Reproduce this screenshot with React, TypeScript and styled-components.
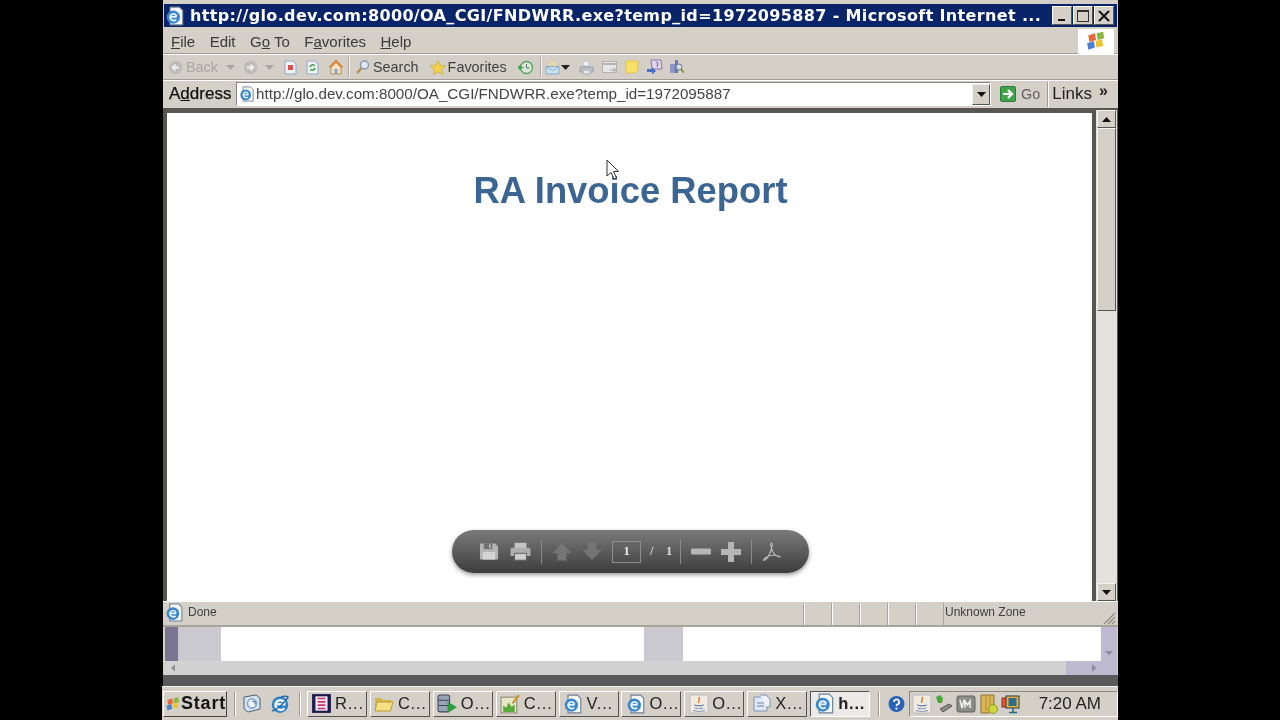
import type { ReactNode } from "react";
import styled, { createGlobalStyle } from "styled-components";

const GlobalStyle = createGlobalStyle`
  html, body {
    margin: 0;
    padding: 0;
    background: #000;
  }
  body {
    width: 1280px;
    height: 720px;
    overflow: hidden;
    font-family: "Liberation Sans", Arial, sans-serif;
  }
`;

const Screen = styled.div`
  width: 955px;
  height: 720px;
  margin-left: 163px;
  background: #d4d0c8;
  display: flex;
  flex-direction: column;
  filter: blur(0.5px);
`;

const TitleFrame = styled.div`
  height: 29px;
  padding: 4px 1px 2px;
  box-sizing: border-box;
  background: #d4d0c8;
`;

const TitleBar = styled.div`
  height: 23px;
  background: #0a246a;
  display: flex;
  align-items: center;
  padding: 0 3px 0 1px;
`;

const TitleText = styled.div`
  flex: 1;
  margin-left: 5px;
  color: #fff;
  font-family: "DejaVu Sans", Verdana, sans-serif;
  font-weight: bold;
  font-size: 16px;
  letter-spacing: 0.35px;
  white-space: nowrap;
  overflow: hidden;
`;

const WinButton = styled.div`
  width: 20px;
  height: 19px;
  margin-left: 1px;
  background: #d4d0c8;
  box-sizing: border-box;
  border: 1px solid;
  border-color: #fff #555 #555 #fff;
  display: flex;
  align-items: center;
  justify-content: center;
  svg {
    display: block;
  }
`;

const MenuBar = styled.div`
  height: 25px;
  display: flex;
  align-items: center;
  padding-left: 8px;
  gap: 14.5px;
  font-size: 15px;
  color: #3a3a3a;
  border-bottom: 1px solid #a09c94;
  box-sizing: border-box;
  position: relative;
`;

const MenuItem = styled.span`
  white-space: nowrap;
`;

const LogoBox = styled.div`
  margin-left: auto;
  margin-right: 4px;
  width: 36px;
  height: 25px;
  background: #fff;
  display: flex;
  align-items: center;
  justify-content: center;
`;

const ToolBar = styled.div`
  height: 26px;
  display: flex;
  align-items: center;
  padding-left: 5px;
  box-sizing: border-box;
  border-top: 1px solid #fff;
  border-bottom: 1px solid #a09c94;
  font-size: 14.4px;
  color: #3f3f3f;
`;

const ToolSlot = styled.div<{ $at: number; $w: number }>`
  margin-left: ${(p) => p.$at}px;
  width: ${(p) => p.$w}px;
  flex: none;
  display: flex;
  align-items: center;
  justify-content: center;
  svg {
    display: block;
  }
`;

const ToolLabel = styled.span<{ $dim?: boolean; $at: number }>`
  margin-left: ${(p) => p.$at}px;
  flex: none;
  color: ${(p) => (p.$dim ? "#a8a6a0" : "#3f3f3f")};
`;

const ToolSep = styled.div<{ $at: number }>`
  margin-left: ${(p) => p.$at}px;
  width: 1px;
  height: 20px;
  background: #aeaaa2;
  box-shadow: 1px 0 0 #f4f4f0;
  flex: none;
`;

const AddressBar = styled.div`
  height: 27px;
  display: flex;
  align-items: center;
  padding-left: 6px;
  box-sizing: border-box;
  border-top: 1px solid #fff;
`;

const AddressLabel = styled.span`
  font-size: 17px;
  color: #111;
  -webkit-text-stroke: 0.25px #111;
  width: 67px;
  flex: none;
`;

const AddressField = styled.div`
  width: 755px;
  flex: none;
  height: 24px;
  box-sizing: border-box;
  background: #fff;
  border: 1px solid;
  border-color: #8a8780 #fff #fff #8a8780;
  display: flex;
  align-items: center;
  padding-left: 2px;
  font-size: 15.2px;
  color: #454545;
  svg {
    display: block;
    margin-right: 1px;
  }
`;

const AddressUrl = styled.span`
  flex: 1;
  white-space: nowrap;
  padding-bottom: 2px;
`;

const DropButton = styled.div`
  width: 18px;
  height: 21px;
  box-sizing: border-box;
  background: #d4d0c8;
  border: 1px solid;
  border-color: #eee #555 #555 #eee;
  display: flex;
  align-items: center;
  justify-content: center;
  svg {
    margin: 0;
  }
`;

const GoLabel = styled.span`
  font-size: 14.4px;
  color: #606060;
  margin-left: 5px;
`;

const GoIcon = styled.svg`
  margin-left: 9px;
  display: block;
`;

const AddrSep = styled.div`
  width: 1px;
  height: 25px;
  margin-left: 7px;
  background: #a09c94;
  box-shadow: 1px 0 0 #fff;
`;

const LinksLabel = styled.span`
  font-size: 17px;
  color: #222;
  margin-left: 4px;
`;

const Chevrons = styled.span`
  font-size: 16px;
  font-weight: bold;
  color: #222;
  margin-left: 7px;
  position: relative;
  top: -3px;
`;

const Viewport = styled.div`
  height: 493px;
  margin-top: 1px;
  display: flex;
  background: #555552;
  box-sizing: border-box;
  padding: 5px 1px 0 4px;
`;

const Page = styled.div`
  flex: 1;
  position: relative;
  background: #fff;
  text-align: center;
`;

const ReportTitle = styled.h1`
  margin: 57px 0 0;
  padding-left: 2px;
  font-size: 36.4px;
  line-height: 42px;
  font-weight: bold;
  color: #3b6592;
`;

const Cursor = styled.svg`
  position: absolute;
  left: 439px;
  top: 46px;
`;

const PdfBar = styled.div`
  position: absolute;
  left: 285px;
  top: 417px;
  width: 357px;
  height: 43px;
  box-sizing: border-box;
  border-radius: 22px;
  background: linear-gradient(#7a7a7a, #5c5c5c 50%, #3c3c3c);
  box-shadow: 0 2px 4px rgba(0, 0, 0, 0.4);
  display: flex;
  align-items: center;
  padding-left: 26px;
`;

const PdfSep = styled.div`
  width: 1px;
  height: 24px;
  margin: 0 10px 0 10px;
  background: #8a8a8a;
`;

const PdfSlot = styled.div<{ $w: number; $gap?: number }>`
  width: ${(p) => p.$w}px;
  margin-right: ${(p) => p.$gap ?? 0}px;
  display: flex;
  justify-content: center;
  svg {
    display: block;
  }
`;

const PageBox = styled.div`
  width: 29px;
  height: 22px;
  margin-left: 10px;
  box-sizing: border-box;
  border: 1px solid #8f8f8f;
  color: #eee;
  font-family: "Liberation Serif", serif;
  font-weight: bold;
  font-size: 12.5px;
  display: flex;
  align-items: center;
  justify-content: center;
`;

const PageCount = styled.span`
  margin-left: 9px;
  width: 20px;
  color: #ddd;
  font-family: "Liberation Serif", serif;
  font-weight: bold;
  font-size: 12.5px;
  white-space: pre;
  text-align: left;
`;

const VScroll = styled.div`
  width: 21px;
  flex: none;
  margin-left: 4px;
  margin-top: -3px;
  background: #e4e2dc;
  display: flex;
  flex-direction: column;
  align-items: center;
  box-sizing: border-box;
  padding: 0 1px;
`;

const ScrollBtn = styled.div<{ $h: number }>`
  width: 100%;
  height: ${(p) => p.$h}px;
  flex: none;
  box-sizing: border-box;
  background: #d4d0c8;
  border: 1px solid;
  border-color: #f4f4f4 #555 #555 #f4f4f4;
  display: flex;
  align-items: center;
  justify-content: center;
`;

const ScrollGap = styled.div`
  flex: 1;
`;

const StatusBar = styled.div`
  height: 26px;
  display: flex;
  align-items: stretch;
  box-sizing: border-box;
  border-top: 1px solid #fff;
  border-bottom: 2px solid #a8a49c;
  padding: 1px 1px 0 2px;
  font-size: 12px;
  color: #3f3f3f;
`;

const StatusMain = styled.div`
  flex: 1;
  display: flex;
  align-items: center;
  gap: 4px;
  padding-bottom: 3px;
  span {
    padding-bottom: 2px;
  }
  svg {
    display: block;
  }
`;

const StatusCell = styled.div`
  width: 27px;
  border-left: 1px solid #a8a49c;
  box-shadow: inset 1px 0 0 #fff;
`;

const StatusZone = styled.div`
  width: 174px;
  box-sizing: border-box;
  border-left: 1px solid #a8a49c;
  display: flex;
  align-items: center;
  padding: 0 0 5px 1px;
  position: relative;
  svg {
    position: absolute;
    right: 1px;
    bottom: 0;
  }
`;

const BackWindow = styled.div`
  height: 34px;
  display: flex;
  background: #fff;
  margin: 0 1px 0 2px;
`;

const BackBlock = styled.div<{ $w: number; $tone: string }>`
  width: ${(p) => p.$w}px;
  background: ${(p) => p.$tone};
  flex: none;
`;

const BackFill = styled.div<{ $w?: number }>`
  ${(p) => (p.$w ? `width: ${p.$w}px; flex: none;` : "flex: 1;")}
  background: #fff;
`;

const BackRight = styled.div`
  width: 16px;
  margin-left: auto;
  background: #bdbad0;
  flex: none;
  display: flex;
  align-items: flex-end;
  justify-content: center;
  padding-bottom: 6px;
  box-sizing: border-box;
`;

const BackScroll = styled.div`
  height: 14px;
  margin: 0 1px 0 2px;
  background: #d2d2d2;
  display: flex;
  align-items: center;
  padding-left: 6px;
  position: relative;
`;

const BackThumb = styled.div`
  position: absolute;
  left: 901px;
  right: 0;
  top: 0;
  bottom: 0;
  background: #bdbad0;
  display: flex;
  align-items: center;
  justify-content: flex-end;
  padding-right: 21px;
`;

const DarkStrip = styled.div`
  height: 11px;
  background: #5a5a5a;
`;

const TaskBar = styled.div`
  flex: 1;
  margin: 0 0 0 -1px;
  border-top: 1px solid #f4f4f0;
  background: #d4d0c8;
  display: flex;
  align-items: center;
  box-sizing: border-box;
  padding-left: 1px;
`;

const StartButton = styled.div`
  width: 64px;
  height: 26px;
  flex: none;
  box-sizing: border-box;
  background: #d4d0c8;
  border: 1px solid;
  border-color: #fff #444 #444 #fff;
  display: flex;
  align-items: center;
  padding-left: 1px;
  font-size: 18px;
  font-weight: bold;
  letter-spacing: 0.8px;
  color: #111;
`;

const TaskSep = styled.div<{ $at: number; $after: number }>`
  width: 1px;
  height: 24px;
  margin-left: ${(p) => p.$at}px;
  margin-right: ${(p) => p.$after}px;
  background: #a09c94;
  box-shadow: 1px 0 0 #fff;
  flex: none;
`;

const QuickIcon = styled.div<{ $gap?: number }>`
  width: 22px;
  margin-right: ${(p) => p.$gap ?? 0}px;
  flex: none;
  display: flex;
  justify-content: center;
  svg {
    display: block;
  }
`;

const TaskButton = styled.div<{ $active?: boolean }>`
  width: 60px;
  height: 26px;
  margin-right: 2.9px;
  flex: none;
  box-sizing: border-box;
  border: 1px solid;
  border-color: ${(p) =>
    p.$active ? "#555 #fff #fff #555" : "#fff #555 #555 #fff"};
  background: ${(p) => (p.$active ? "#eceae6" : "#d4d0c8")};
  display: flex;
  align-items: center;
  padding-left: 3px;
  gap: 3px;
  font-size: 16.5px;
  font-weight: ${(p) => (p.$active ? "bold" : "normal")};
  letter-spacing: 0.8px;
  color: #222;
  white-space: nowrap;
`;

const TaskGlyph = styled.span`
  width: 21px;
  flex: none;
  display: flex;
  justify-content: center;
  svg {
    display: block;
  }
`;

const HelpIcon = styled.svg`
  margin-left: 9px;
  margin-right: 4px;
  display: block;
  flex: none;
`;

const Tray = styled.div`
  flex: 1;
  height: 26px;
  box-sizing: border-box;
  border: 1px solid;
  border-color: #8a8780 #fff #fff #8a8780;
  display: flex;
  align-items: center;
  padding-left: 2px;
`;

const TraySlot = styled.div<{ $at: number }>`
  margin-left: ${(p) => p.$at}px;
  flex: none;
  svg {
    display: block;
  }
`;

const Clock = styled.span`
  margin-left: auto;
  margin-right: 16px;
  font-size: 17px;
  color: #222;
  white-space: nowrap;
`;

const IEGlobe = ({ size = 16 }: { size?: number }) => (
  <svg width={size} height={size} viewBox="0 0 16 16">
    <circle cx="8" cy="8.5" r="6.6" fill="#2f7fc8" />
    <path d="M4 8.2h8.4M12 7.6A4 4 0 0 0 4.5 7.5 4.2 4.2 0 0 0 11.6 11.4" fill="none" stroke="#e6f2fc" strokeWidth="2" />
    <path d="M1.5 13.5C4 14 12 7 14.5 2.500 12 1 10 2 9 2.400" fill="none" stroke="#1d5fa5" strokeWidth="1" />
  </svg>
);

const IEPage = ({ size = 16 }: { size?: number }) => (
  <svg width={size} height={size} viewBox="0 0 18 18">
    <path d="M4.500 1H13l3 3v13H4.500z" fill="#f4f7fb" stroke="#6d7f95" strokeWidth="1" />
    <circle cx="7.500" cy="10" r="6" fill="#3a86cc" />
    <path d="M4.400 9.800h6.200M10.400 9A3 3 0 0 0 4.800 9 3.200 3.200 0 0 0 10 12.300" fill="none" stroke="#e6f2fc" strokeWidth="1.600" />
  </svg>
);

const Flag = ({ size = 20 }: { size?: number }) => (
  <svg width={size} height={size} viewBox="0 0 20 20">
    <path d="M3 5l6-2 1 6-6 2z" fill="#e8663a" />
    <path d="M10.500 3l6-1.500 1 6-6 1.500z" fill="#8ab83e" />
    <path d="M2 12l6-2 1 6-6 2z" fill="#4a82cf" />
    <path d="M9.500 10l6-1.500 1 6-6 1.500z" fill="#f2c230" />
  </svg>
);

const Caret = ({ dir = "down", color = "#111", w = 9 }: { dir?: "up" | "down" | "left" | "right"; color?: string; w?: number }) => {
  const pts = {
    up: "0,5 4.5,0 9,5",
    down: "0,0 9,0 4.5,5",
    left: "5,0 5,9 0,4.5",
    right: "0,0 5,4.5 0,9",
  }[dir];
  const vert = dir === "up" || dir === "down";
  return (
    <svg width={vert ? w : (w * 5) / 9} height={vert ? (w * 5) / 9 : w} viewBox={vert ? "0 0 9 5" : "0 0 5 9"}>
      <polygon points={pts} fill={color} />
    </svg>
  );
};

const NavCircle = () => (
  <svg width="15" height="15" viewBox="0 0 15 15">
    <circle cx="7.500" cy="7.500" r="6.800" fill="#bdbcb8" />
    <path d="M11 7.500H5M7.500 4.700L4.700 7.500l2.800 2.800" fill="none" stroke="#f1f1ef" strokeWidth="1.800" />
  </svg>
);

const NavCircleFwd = () => (
  <svg width="15" height="15" viewBox="0 0 15 15">
    <circle cx="7.500" cy="7.500" r="6.800" fill="#bdbcb8" />
    <path d="M4 7.500h6M7.500 4.700l2.800 2.800-2.800 2.800" fill="none" stroke="#f1f1ef" strokeWidth="1.800" />
  </svg>
);

const StopIcon = () => (
  <svg width="13" height="15" viewBox="0 0 13 15">
    <path d="M1 1h8l3 3v10H1z" fill="#eef1f6" stroke="#93a6c8" />
    <rect x="4" y="5" width="5" height="5" fill="#d8504a" />
  </svg>
);

const RefreshIcon = () => (
  <svg width="13" height="15" viewBox="0 0 13 15">
    <path d="M1 1h8l3 3v10H1z" fill="#eef1f6" stroke="#93a6c8" />
    <path d="M4 7a2.600 2.600 0 0 1 4.600-1.200M9 8a2.600 2.600 0 0 1-4.600 1.200" fill="none" stroke="#3da34a" strokeWidth="1.600" />
  </svg>
);

const HomeIcon = () => (
  <svg width="16" height="16" viewBox="0 0 16 16">
    <path d="M8 1L1 8h2v7h10V8h2z" fill="#f3e2c4" stroke="#c48a4a" />
    <path d="M8 1L1 8h3l4-4 4 4h3z" fill="#e2873a" />
    <rect x="6.500" y="10" width="3" height="5" fill="#8aa0c8" />
  </svg>
);

const SearchIcon = () => (
  <svg width="15" height="16" viewBox="0 0 15 16">
    <circle cx="9.500" cy="6" r="4" fill="#dfeaf6" stroke="#8497ad" strokeWidth="1.400" />
    <path d="M6.500 9L2 14" stroke="#b38d55" strokeWidth="2.400" />
  </svg>
);

const StarIcon = () => (
  <svg width="16" height="15" viewBox="0 0 16 15">
    <polygon points="8,0.5 10.2,5.3 15.5,5.8 11.5,9.3 12.7,14.5 8,11.7 3.3,14.5 4.5,9.3 0.5,5.8 5.8,5.3" fill="#f4d34c" stroke="#c9a537" strokeWidth="0.7" />
  </svg>
);

const HistoryIcon = () => (
  <svg width="16" height="15" viewBox="0 0 16 15">
    <circle cx="8.500" cy="7.500" r="6" fill="#dcead6" stroke="#5aa368" strokeWidth="1.400" />
    <path d="M8.500 4v4h3" fill="none" stroke="#5c6a78" />
    <path d="M0.500 7.500h5M3 5L.5 7.500 3 10" fill="none" stroke="#3da34a" strokeWidth="1.400" />
  </svg>
);

const MailIcon = () => (
  <svg width="15" height="15" viewBox="0 0 15 15">
    <circle cx="8" cy="5" r="4" fill="#e6d8a8" />
    <path d="M1 6.500h13V14H1z" fill="#c9dff2" stroke="#8ba8c6" />
    <path d="M1 6.500l6.500 4 6.500-4" fill="none" stroke="#8ba8c6" />
  </svg>
);

const PrintIcon = () => (
  <svg width="15" height="15" viewBox="0 0 15 15">
    <path d="M4 1h6v5H4z" fill="#eef0f2" stroke="#b4bac2" />
    <path d="M1 7h13v5H1z" fill="#bcc1c8" stroke="#9aa0a8" />
    <path d="M4 10h7v4H4z" fill="#e6e8ec" stroke="#aab0b8" />
  </svg>
);

const EditIcon = () => (
  <svg width="16" height="13" viewBox="0 0 16 13">
    <rect x="0.500" y="0.500" width="14" height="11" fill="#e8e8e6" stroke="#b2b2ae" />
    <path d="M1 3h13" stroke="#b2b2ae" strokeWidth="2" />
    <path d="M8 9h6M11 7l3 2-3 2" fill="none" stroke="#a8a8a4" />
  </svg>
);

const NoteIcon = () => (
  <svg width="14" height="14" viewBox="0 0 14 14">
    <path d="M1 1h12v9l-3 3H1z" fill="#f7df6a" stroke="#e0c24a" />
  </svg>
);

const MessengerIcon = () => (
  <svg width="17" height="16" viewBox="0 0 17 16">
    <path d="M5 1h10l1 9H6z" fill="#ded4ec" stroke="#8a78b4" />
    <path d="M10 3l2 1-1 4" fill="none" stroke="#7a5aa8" />
    <path d="M1 10h5V8l4 4-4 3.500V13H1z" fill="#4a6fc4" />
  </svg>
);

const ResearchIcon = () => (
  <svg width="15" height="16" viewBox="0 0 15 16">
    <rect x="1" y="5" width="5" height="9" fill="#8c96c8" />
    <rect x="6" y="1" width="3" height="13" fill="#6a78b8" />
    <circle cx="10" cy="8" r="3" fill="#cfe0ea" stroke="#6f7d8a" />
    <path d="M12 10l2.500 3.500" stroke="#8a7a3a" strokeWidth="1.600" />
  </svg>
);

const GoArrow = () => (
  <GoIcon width="16" height="16" viewBox="0 0 16 16">
    <rect x="0.500" y="0.500" width="15" height="15" rx="1.500" fill="#3fa34a" stroke="#2a7c38" />
    <path d="M3 8h8M8 4l4 4-4 4" fill="none" stroke="#fff" strokeWidth="2.200" />
  </GoIcon>
);

const SaveIcon = () => (
  <svg width="20" height="19" viewBox="0 0 21 19">
    <path d="M1 1h16l3 3v14H1z" fill="#b4b4b4" />
    <rect x="5" y="1" width="9" height="6" fill="#707070" />
    <rect x="10.500" y="2" width="2" height="4" fill="#b4b4b4" />
    <rect x="4" y="10" width="13" height="8" fill="#d4d4d4" />
  </svg>
);

const PrinterIcon = () => (
  <svg width="21" height="19" viewBox="0 0 23 20">
    <rect x="5" y="0.500" width="13" height="6" fill="#c4c4c4" />
    <path d="M0.500 8a2 2 0 0 1 2-2h18a2 2 0 0 1 2 2v7h-22z" fill="#aeaeae" />
    <rect x="5" y="12" width="13" height="7.500" fill="#cfcfcf" stroke="#5e5e5e" />
  </svg>
);

const PdfArrow = ({ up }: { up?: boolean }) => (
  <svg width="20" height="19" viewBox="0 0 20 19">
    <path
      d={up ? "M10 1L19.500 11H14.500V18.500H5.500V11H.5z" : "M10 18L19.500 8H14.500V.5H5.500V8H.5z"}
      fill="#757575"
    />
  </svg>
);

const MinusIcon = () => (
  <svg width="20" height="7" viewBox="0 0 20 7">
    <rect width="20" height="6" y="0.500" rx="1" fill="#b6b6b6" />
  </svg>
);

const PlusIcon = () => (
  <svg width="20" height="20" viewBox="0 0 20 20">
    <path d="M7 0h6v7h7v6h-7v7H7v-7H0V7h7z" fill="#b6b6b6" />
  </svg>
);

const AcrobatIcon = () => (
  <svg width="20" height="20" viewBox="0 0 20 20">
    <path
      d="M9.500 1C8 1.500 9 6 11 10c1.500 3 4 4.500 7.500 5C15 12.500 7 12.500 3 16c-2 2-1.500 3 0 2 2.500-1.500 5-6.500 6.500-11.500C10.300 4 10.500 1.500 9.500 1z"
      fill="none"
      stroke="#b6b6b6"
      strokeWidth="1.200"
    />
  </svg>
);

const ReportDocIcon = () => (
  <svg width="21" height="21" viewBox="0 0 19 19">
    <rect x="1" y="1" width="17" height="17" fill="#1c1c4c" />
    <rect x="4" y="3" width="11" height="13" fill="#f0e4f0" />
    <path d="M6 5h7M6 8h7M6 11h7M6 14h7" stroke="#c03a6a" strokeWidth="1.500" />
  </svg>
);

const FolderIcon = () => (
  <svg width="20" height="17" viewBox="0 0 20 17">
    <path d="M1 3h6l2 2h8v10H1z" fill="#d8b64a" />
    <path d="M3 7h16l-2.500 9H1z" fill="#f6df84" stroke="#b89a3a" />
  </svg>
);

const DbIcon = () => (
  <svg width="21" height="20" viewBox="0 0 20 19">
    <rect x="1" y="1" width="11" height="16" rx="2" fill="#9aa4b8" stroke="#3e4658" />
    <path d="M1 6h11M1 11h11" stroke="#3e4658" />
    <path d="M10 7l9 5.500-9 5.500z" fill="#2c9c3a" />
  </svg>
);

const ChartIcon = () => (
  <svg width="21" height="20" viewBox="0 0 20 19">
    <rect x="1" y="3" width="15" height="15" fill="#e8e6c8" stroke="#8a8a70" />
    <path d="M3 17V11l3 2 2-5 3 4 3-2v7z" fill="#5aa83a" />
    <path d="M12 9l6-8" stroke="#c8922a" strokeWidth="2" />
  </svg>
);

const JavaIcon = () => (
  <svg width="20" height="20" viewBox="0 0 20 20">
    <rect x="1" y="1" width="18" height="18" rx="2" fill="#f0ebe0" stroke="#b8bcc8" />
    <path d="M10 3c2 2-2 3 0 6" fill="none" stroke="#d87a30" strokeWidth="1.500" />
    <path d="M5 11c3 1 7 1 10 0M6 14c2 1 6 1 8 0M4 16.500c3 1 9 1 12 0" fill="none" stroke="#6a86b0" strokeWidth="1.200" />
  </svg>
);

const TextDocIcon = () => (
  <svg width="20" height="20" viewBox="0 0 20 20">
    <path d="M2 3h9l4 3v11H2z" fill="#dfe8f4" stroke="#7f94b4" />
    <path d="M8 1h6l4 4v8h-4" fill="#eef2f8" stroke="#7f94b4" />
    <path d="M5 9h7M5 12h7" stroke="#6f84a8" />
  </svg>
);

const QuickDesktop = () => (
  <svg width="19" height="19" viewBox="0 0 19 19">
    <path d="M2 3l12-2 4 3v11L6 18l-4-3z" fill="#d6e2f0" stroke="#50607a" />
    <circle cx="10" cy="9.500" r="4.500" fill="#eef4fa" stroke="#7fa0c4" strokeWidth="1.500" />
    <path d="M10 7.500h3v3" fill="none" stroke="#5c7ca2" strokeWidth="1.200" />
  </svg>
);

const HelpBadge = () => (
  <HelpIcon width="17" height="18" viewBox="0 0 17 18">
    <circle cx="8.500" cy="9" r="8" fill="#2a62b8" />
    <path d="M6 7a2.600 2.600 0 1 1 3.600 2.300c-.8.400-1.100.8-1.100 1.700M8.500 12.600v1.800" fill="none" stroke="#fff" strokeWidth="1.800" />
  </HelpIcon>
);

const TrayPlug = () => (
  <svg width="20" height="20" viewBox="0 0 20 20">
    <path d="M3 3l4-2 3 3-1 5H5z" fill="#4aa83a" />
    <path d="M7 15l9-5 3 2-9 6z" fill="#8c8c84" stroke="#55554f" />
  </svg>
);

const TrayVm = () => (
  <svg width="20" height="18" viewBox="0 0 20 18">
    <rect x="1" y="1" width="18" height="16" rx="2" fill="#8c8c88" stroke="#5e5e5a" />
    <path d="M4 5l2 8 2-8M9 13V6l2.500 4L14 6v7" fill="none" stroke="#f0f0ec" strokeWidth="1.500" />
  </svg>
);

const TrayShield = () => (
  <svg width="20" height="20" viewBox="0 0 20 20">
    <path d="M2 1h13v15l-6 3H2z" fill="#dcb654" stroke="#8e7430" />
    <path d="M7 2v15M11 2v14" stroke="#b08e3a" />
    <circle cx="14" cy="15" r="4.500" fill="#cfd63a" stroke="#8e9a28" />
  </svg>
);

const TrayNet = () => (
  <svg width="20" height="20" viewBox="0 0 20 20">
    <rect x="1" y="4" width="11" height="9" fill="#e8563a" stroke="#8a2a1a" />
    <rect x="5" y="2" width="13" height="12" fill="#f0b040" stroke="#1c3c50" />
    <rect x="7.500" y="4" width="8" height="8" fill="#2c6c8c" />
    <path d="M12 14v4M8 18.500h8" stroke="#1c6c8c" strokeWidth="1.500" />
  </svg>
);

const Grip = () => (
  <svg width="13" height="13" viewBox="0 0 13 13">
    <path d="M1 12L12 1M5 12l7-7M9 12l3-3" stroke="#8f8b84" strokeWidth="1.200" />
  </svg>
);

const tasks: { icon: ReactNode; label: string; active?: boolean }[] = [
  { icon: <ReportDocIcon />, label: "R..." },
  { icon: <FolderIcon />, label: "C..." },
  { icon: <DbIcon />, label: "O..." },
  { icon: <ChartIcon />, label: "C..." },
  { icon: <IEPage size={20} />, label: "V..." },
  { icon: <IEPage size={20} />, label: "O..." },
  { icon: <JavaIcon />, label: "O..." },
  { icon: <TextDocIcon />, label: "X..." },
  { icon: <IEPage size={21} />, label: "h...", active: true },
];

export default function App() {
  return (
    <>
      <GlobalStyle />
      <Screen>
        <TitleFrame>
          <TitleBar>
            <IEPage size={20} />
            <TitleText>
              http://glo.dev.com:8000/OA_CGI/FNDWRR.exe?temp_id=1972095887 - Microsoft Internet ...
            </TitleText>
            <WinButton>
              <svg width="10" height="12" viewBox="0 0 10 12">
                <rect x="1" y="9" width="7" height="2" fill="#111" />
              </svg>
            </WinButton>
            <WinButton>
              <svg width="12" height="12" viewBox="0 0 12 12">
                <rect x="0.500" y="0.500" width="11" height="11" fill="none" stroke="#333" />
                <rect x="0.500" y="0.500" width="11" height="1.500" fill="#333" />
              </svg>
            </WinButton>
            <WinButton>
              <svg width="12" height="12" viewBox="0 0 12 12">
                <path d="M1 1l10 10M11 1L1 11" stroke="#111" strokeWidth="2" />
              </svg>
            </WinButton>
          </TitleBar>
        </TitleFrame>

        <MenuBar>
          <MenuItem><u>F</u>ile</MenuItem>
          <MenuItem>Edit</MenuItem>
          <MenuItem>G<u>o</u> To</MenuItem>
          <MenuItem>F<u>a</u>vorites</MenuItem>
          <MenuItem><u>H</u>elp</MenuItem>
          <LogoBox>
            <Flag size={22} />
          </LogoBox>
        </MenuBar>

        <ToolBar>
          <ToolSlot $at={0} $w={15}><NavCircle /></ToolSlot>
          <ToolLabel $dim $at={3}>Back</ToolLabel>
          <ToolSlot $at={8} $w={9}><Caret color="#a8a6a0" /></ToolSlot>
          <ToolSlot $at={8} $w={15}><NavCircleFwd /></ToolSlot>
          <ToolSlot $at={7} $w={9}><Caret color="#a8a6a0" /></ToolSlot>
          <ToolSlot $at={10} $w={13}><StopIcon /></ToolSlot>
          <ToolSlot $at={9} $w={13}><RefreshIcon /></ToolSlot>
          <ToolSlot $at={9} $w={16}><HomeIcon /></ToolSlot>
          <ToolSep $at={4} />
          <ToolSlot $at={6} $w={15}><SearchIcon /></ToolSlot>
          <ToolLabel $at={3}>Search</ToolLabel>
          <ToolSlot $at={11} $w={16}><StarIcon /></ToolSlot>
          <ToolLabel $at={2}>Favorites</ToolLabel>
          <ToolSlot $at={11} $w={16}><HistoryIcon /></ToolSlot>
          <ToolSep $at={6} />
          <ToolSlot $at={4} $w={15}><MailIcon /></ToolSlot>
          <ToolSlot $at={1} $w={9}><Caret color="#222" /></ToolSlot>
          <ToolSlot $at={9} $w={15}><PrintIcon /></ToolSlot>
          <ToolSlot $at={8} $w={16}><EditIcon /></ToolSlot>
          <ToolSlot $at={7} $w={14}><NoteIcon /></ToolSlot>
          <ToolSlot $at={7} $w={17}><MessengerIcon /></ToolSlot>
          <ToolSlot $at={6} $w={15}><ResearchIcon /></ToolSlot>
        </ToolBar>

        <AddressBar>
          <AddressLabel>A<u>d</u>dress</AddressLabel>
          <AddressField>
            <IEPage size={16} />
            <AddressUrl>http://glo.dev.com:8000/OA_CGI/FNDWRR.exe?temp_id=1972095887</AddressUrl>
            <DropButton><Caret /></DropButton>
          </AddressField>
          <GoArrow />
          <GoLabel>Go</GoLabel>
          <AddrSep />
          <LinksLabel>Links</LinksLabel>
          <Chevrons>»</Chevrons>
        </AddressBar>

        <Viewport>
          <Page>
            <ReportTitle>RA Invoice Report</ReportTitle>
            <Cursor width="14" height="22" viewBox="0 0 14 22">
              <path d="M1 1v16l4-3.500 3 6.500 2.500-1-3-6.500h5z" fill="#fff" stroke="#333" strokeWidth="1" />
            </Cursor>
            <PdfBar>
              <PdfSlot $w={22} $gap={9}><SaveIcon /></PdfSlot>
              <PdfSlot $w={22}><PrinterIcon /></PdfSlot>
              <PdfSep />
              <PdfSlot $w={20} $gap={10}><PdfArrow up /></PdfSlot>
              <PdfSlot $w={20}><PdfArrow /></PdfSlot>
              <PageBox>1</PageBox>
              <PageCount>{"/    1"}</PageCount>
              <PdfSep />
              <PdfSlot $w={20} $gap={10}><MinusIcon /></PdfSlot>
              <PdfSlot $w={20}><PlusIcon /></PdfSlot>
              <PdfSep />
              <PdfSlot $w={20}><AcrobatIcon /></PdfSlot>
            </PdfBar>
          </Page>
          <VScroll>
            <ScrollBtn $h={18}><Caret dir="up" /></ScrollBtn>
            <ScrollBtn $h={183} />
            <ScrollGap />
            <ScrollBtn $h={18}><Caret /></ScrollBtn>
          </VScroll>
        </Viewport>

        <StatusBar>
          <StatusMain>
            <IEPage size={19} />
            <span>Done</span>
          </StatusMain>
          <StatusCell />
          <StatusCell />
          <StatusCell />
          <StatusCell />
          <StatusCell />
          <StatusZone>
            Unknown Zone
            <Grip />
          </StatusZone>
        </StatusBar>

        <BackWindow>
          <BackBlock $w={13} $tone="#7a7590" />
          <BackBlock $w={43} $tone="#c9c9cf" />
          <BackFill $w={423} />
          <BackBlock $w={39} $tone="#c9c9cf" />
          <BackFill />
          <BackRight><Caret color="#8f8fa0" w={8} /></BackRight>
        </BackWindow>
        <BackScroll>
          <Caret dir="left" color="#8f8f8f" w={8} />
          <BackThumb><Caret dir="right" color="#8f8f9f" w={8} /></BackThumb>
        </BackScroll>
        <DarkStrip />

        <TaskBar>
          <StartButton>
            <Flag size={18} />
            Start
          </StartButton>
          <TaskSep $at={7} $after={5} />
          <QuickIcon $gap={7}><QuickDesktop /></QuickIcon>
          <QuickIcon><IEGlobe size={20} /></QuickIcon>
          <TaskSep $at={8} $after={7} />
          {tasks.map((t, i) => (
            <TaskButton key={i} $active={t.active}>
              <TaskGlyph>{t.icon}</TaskGlyph>
              {t.label}
            </TaskButton>
          ))}
          <TaskSep $at={5} $after={0} />
          <HelpBadge />
          <Tray>
            <TraySlot $at={0}><JavaIcon /></TraySlot>
            <TraySlot $at={1}><TrayPlug /></TraySlot>
            <TraySlot $at={3}><TrayVm /></TraySlot>
            <TraySlot $at={3}><TrayShield /></TraySlot>
            <TraySlot $at={2}><TrayNet /></TraySlot>
            <Clock>7:20 AM</Clock>
          </Tray>
        </TaskBar>
      </Screen>
    </>
  );
}
